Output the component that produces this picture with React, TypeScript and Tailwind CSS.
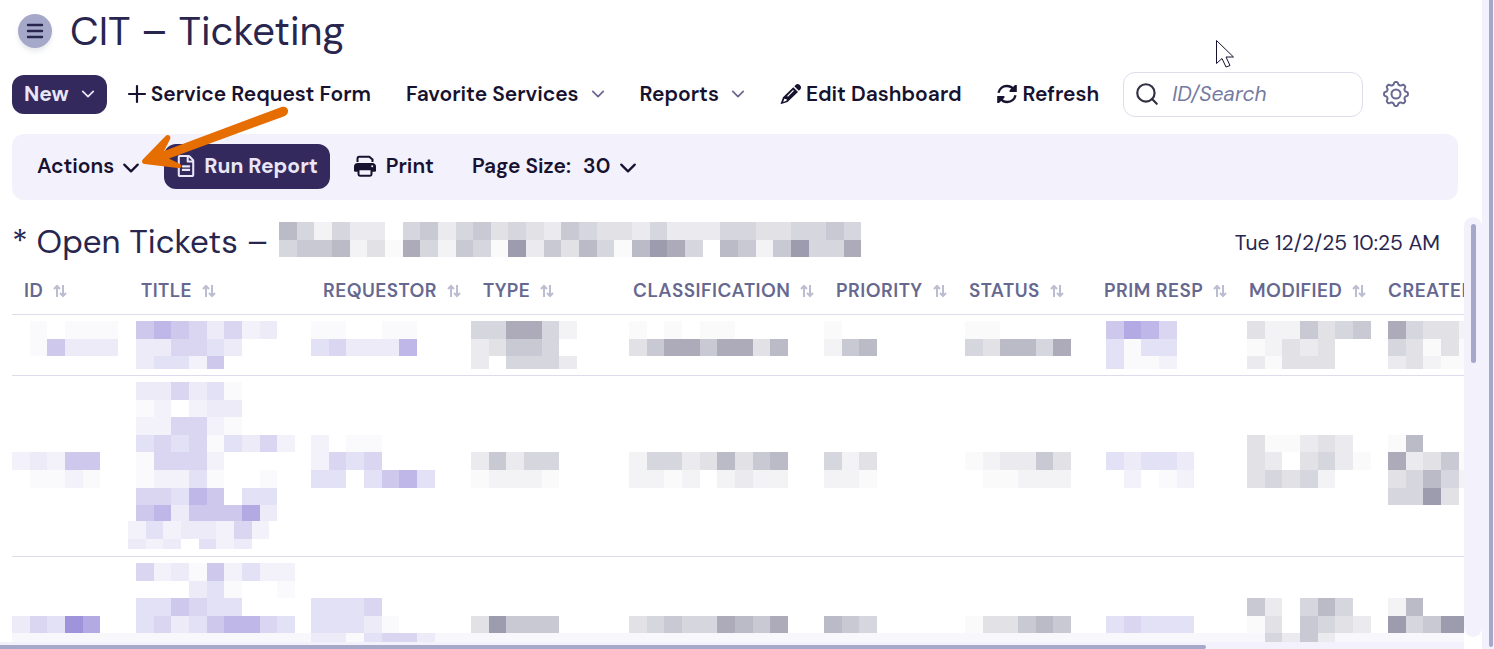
import { Search } from 'lucide-react';
import { FaRegFileAlt } from 'react-icons/fa';

type Tone = 'gray' | 'violet';

const TONES: Record<Tone, string[]> = {
  gray: ['none', '#fafafb', '#f3f3f6', '#ebebef', '#e1e1e6', '#d6d7de', '#c9c9d3', '#bbbac7', '#adabba', '#9c9cae'],
  violet: ['none', '#fafafd', '#f3f2fb', '#edebf8', '#e3e1f5', '#dad6f2', '#cec8ed', '#bfb7e8', '#b3aae3', '#9f94dc'],
};

const STEP_X = 17.65;
const STEP_Y = 17.6;

const HEADING_MASK = ['752533056356454365443533355445565', '566724185265193647517985076269558'];

interface Column {
  label: string;
  width: string;
  pad: string;
  tone: Tone;
}

const COLUMNS: Column[] = [
  { label: 'ID', width: 'w-[117px]', pad: 'pl-0', tone: 'violet' },
  { label: 'TITLE', width: 'w-[182px]', pad: 'pl-[7px]', tone: 'violet' },
  { label: 'REQUESTOR', width: 'w-[160px]', pad: 'pl-0', tone: 'violet' },
  { label: 'TYPE', width: 'w-[150px]', pad: 'pl-0', tone: 'gray' },
  { label: 'CLASSIFICATION', width: 'w-[203px]', pad: 'pl-2', tone: 'gray' },
  { label: 'PRIORITY', width: 'w-[133px]', pad: 'pl-0', tone: 'gray' },
  { label: 'STATUS', width: 'w-[135px]', pad: 'pl-2', tone: 'gray' },
  { label: 'PRIM RESP', width: 'w-[145px]', pad: 'pl-[14px]', tone: 'violet' },
  { label: 'MODIFIED', width: 'w-[139px]', pad: 'pl-[10px]', tone: 'gray' },
  { label: 'CREATED', width: 'w-[180px]', pad: 'pl-3', tone: 'gray' },
];

// One string per line of a cell, one digit per block, 0 is empty
const ROWS: { height: string; maxHeight: number; cells: string[][]; extra?: string[] }[] = [
  {
    height: 'h-[61px]',
    maxHeight: 48,
    cells: [
      ['010111', '016333'],
      ['67653523', '335543', '34426'],
      ['110011', '453337'],
      ['558852', '34665', '305553'],
      ['101011', '468868847'],
      ['1', '267'],
      ['11', '547758'],
      ['6875', '4144', '4112'],
      ['4226456', '12434', '31444'],
      ['85442', '54141', '34211'],
    ],
  },
  {
    height: 'h-[181px]',
    maxHeight: 139,
    cells: [
      ['', '', '', '', '23266', '01121'],
      ['335341', '120233', '225521', '454514352', '15552', '12241001', '55476044', '67366683'],
      ['', '', '', '2011', '2545', '4404674'],
      ['', '', '', '', '36355', '12221'],
      ['', '', '', '', '255347467', '221202322'],
      ['', '', '', '', '524', '221'],
      ['', '', '', '', '123364', '011222'],
      ['', '', '', '', '43443', '02012'],
      ['', '', '', '411343', '4304531', '45452'],
      ['', '', '', '17', '83461', '45752', '5594'],
    ],
    extra: ['24233252', '3230423'],
  },
  {
    height: 'h-[181px]',
    maxHeight: 80,
    cells: [
      ['', '', '', '35498'],
      ['523162422', '000341001', '446544', '453467754'],
      ['', '', '4445', '44431', '3314553'],
      ['', '', '', '49666'],
      ['', '', '', '456558768'],
      ['', '', '', '765'],
      ['', '', '', '144676'],
      ['', '', '', '45444'],
      ['', '', '630575', '1406543', '05363'],
      ['', '', '27', '95699'],
    ],
  },
];

function Mosaic({ lines, tone, maxHeight }: { lines: string[]; tone: Tone; maxHeight: number }) {
  const cols = Math.max(...lines.map(l => l.length));
  const width = Math.round(cols * STEP_X);
  const height = Math.min(Math.round(lines.length * STEP_Y), maxHeight);
  return (
    <svg className="block max-w-none" width={width} height={height} shapeRendering="crispEdges" aria-hidden="true">
      {lines.map((line, y) =>
        line.split('').map((n, x) => (
          <rect key={`${x}-${y}`} x={x * STEP_X} y={y * STEP_Y} width={STEP_X} height={STEP_Y} fill={TONES[tone][Number(n)]} />
        ))
      )}
    </svg>
  );
}

function Chevron({ className }: { className: string }) {
  return (
    <svg className={className} viewBox="0 0 16 16" fill="none" stroke="currentColor" strokeLinecap="round" strokeLinejoin="round" aria-hidden="true">
      <path d="M2 5l6 6 6-6" />
    </svg>
  );
}

function SortIcon() {
  return (
    <svg className="w-[14px] h-[14px] text-[#bcbdd0]" viewBox="0 0 14 14" fill="none" stroke="currentColor" strokeWidth={2} aria-hidden="true">
      <path d="M4 13V2M1 5l3-3 3 3M10 1v11M7 9l3 3 3-3" />
    </svg>
  );
}

function PencilIcon() {
  return (
    <svg className="w-[22px] h-[22px]" viewBox="0 0 22 22" fill="currentColor" aria-hidden="true">
      <path d="M14.300 3.200l1.600-1.500c1.100-1 2.600-.9 3.600.1l.8.9c1 1 1 2.500.1 3.500l-1.500 1.500z" />
      <path fillRule="evenodd" d="M13.300 4.200l4.700 4.700L7.500 18.900l-6.300 2.200c-.4.1-.6-.1-.5-.5L3 14.300zM4.400 15.500l-1.200 3.400 3.300-1.200.2-1.700-1.700-.1z" />
      <path d="M7.500 13.300l6-6" stroke="#fff" strokeWidth="1.200" fill="none" />
    </svg>
  );
}

function RefreshIcon() {
  return (
    <svg className="w-5 h-5" viewBox="0 0 20 20" fill="none" stroke="currentColor" strokeWidth={2.4} aria-hidden="true">
      <path d="M1.500 8.700C2.400 4.700 5.700 2 9.800 2c3 0 5.400 1.400 7 3.700M18.500 11.300c-.9 4-4.200 6.700-8.300 6.700-3 0-5.400-1.400-7-3.700" />
      <path d="M19.800 1v7h-7.200v-1.800l5.400-5.200zM.2 19v-7h7.200v1.800l-5.400 5.200z" fill="currentColor" stroke="none" />
    </svg>
  );
}

function PrinterIcon() {
  return (
    <svg className="w-[22px] h-[22px]" viewBox="0 0 22 22" fill="none" aria-hidden="true">
      <path d="M3.500 7V3.700C3.500 2.500 4.300 1.800 5.300 1.800h10l3.200 2.700V7" stroke="currentColor" strokeWidth="2" />
      <path d="M3.500 8h15C20.400 8 22 9.400 22 11.300V15.500c0 .8-.4 1.200-1.200 1.200H1.200C.4 16.700 0 16.300 0 15.500v-4.200C0 9.400 1.600 8 3.500 8z" fill="currentColor" />
      <path d="M4.500 14.300h13v5c0 .9-.5 1.400-1.400 1.400H5.900c-.9 0-1.400-.5-1.400-1.400z" fill="#f3f1fc" stroke="currentColor" strokeWidth="2" />
      <circle cx="18.200" cy="11.300" r="1" fill="#f3f1fc" />
    </svg>
  );
}

// Eight-lobed cog, sampled as a wavy ring
function GearIcon() {
  const points = Array.from({ length: 96 }, (_, i) => {
    const a = (i / 96) * Math.PI * 2;
    const wave = Math.cos(8 * a);
    const r = 10.7 + 1.3 * Math.tanh(2 * wave);
    return `${(13 + r * Math.cos(a)).toFixed(2)},${(13 + r * Math.sin(a)).toFixed(2)}`;
  });
  return (
    <svg className="w-[26px] h-[26px]" viewBox="0 0 26 26" fill="none" stroke="currentColor" strokeWidth={2} strokeLinejoin="round" aria-hidden="true">
      <polygon points={points.join(' ')} />
      <circle cx="13" cy="13" r="4.500" />
    </svg>
  );
}

function Header() {
  return (
    <header className="flex items-center gap-[18px] h-[62px] pl-[18px]">
      <button aria-label="Menu" className="flex items-center justify-center w-[34px] h-[34px] rounded-full bg-[#a6a8ca] shadow-md shadow-gray-200">
        <svg className="w-[18px] h-4" viewBox="0 0 18 16" stroke="#28264f" strokeWidth={2.4} strokeLinecap="round" aria-hidden="true">
          <path d="M2 2h14M2 8h14M2 14h14" />
        </svg>
      </button>
      <h1 className="text-[40px] leading-none text-[#28264f]">CIT – Ticketing</h1>
    </header>
  );
}

function Toolbar() {
  return (
    <nav className="flex items-center h-16 pl-3 text-[21px] leading-[30px] font-semibold text-[#17122f] whitespace-nowrap">
      <button className="flex items-center gap-3 h-[39px] px-3 mr-5 rounded-xl bg-[#34295c] text-[#e9e6f7] font-bold">
        New
        <Chevron className="w-[14px] h-[14px] stroke-2" />
      </button>
      <a href="#request" className="flex items-center gap-1 mr-[35px]">
        <svg className="w-5 h-5" viewBox="0 0 20 20" stroke="currentColor" strokeWidth={2.2} strokeLinecap="round" aria-hidden="true">
          <path d="M10 2v16M2 10h16" />
        </svg>
        Service Request Form
      </a>
      <button className="flex items-center gap-3 mr-[35px]">
        Favorite Services
        <Chevron className="w-[14px] h-[14px] stroke-2 text-[#6b688f]" />
      </button>
      <button className="flex items-center gap-3 mr-[35px]">
        Reports
        <Chevron className="w-[14px] h-[14px] stroke-2 text-[#6b688f]" />
      </button>
      <button className="flex items-center gap-1 mr-[35px]">
        <PencilIcon />
        Edit Dashboard
      </button>
      <button className="flex items-center gap-[6px] mr-6">
        <RefreshIcon />
        Refresh
      </button>
      <label className="flex items-center gap-3 w-60 h-[45px] px-[10px] rounded-xl border border-[#dfdcec] font-normal">
        <Search className="w-[26px] h-[26px] shrink-0 text-[#343044]" />
        <input type="text" aria-label="ID/Search" placeholder="ID/Search" className="w-full min-w-0 outline-none italic placeholder:text-[#757a9f]" />
      </label>
      <button aria-label="Settings" className="ml-5 text-[#676990]">
        <GearIcon />
      </button>
    </nav>
  );
}

function ReportBar() {
  return (
    <div className="flex items-center h-[66px] mt-2 ml-3 mr-6 pl-[25px] pb-[2px] rounded-xl bg-[#f3f1fc] text-[21px] leading-[30px] font-semibold text-[#17122f] whitespace-nowrap">
      <button className="flex items-center gap-2 mr-6">
        Actions
        <Chevron className="w-[18px] h-[18px] mt-1 stroke-2" />
      </button>
      <button className="flex items-center gap-2 h-[45px] px-3 mr-6 rounded-xl bg-[#34295c] text-[#e9e6f7] font-bold">
        <FaRegFileAlt className="w-5 h-[22px]" />
        Run Report
      </button>
      <button className="flex items-center gap-[10px] mr-[38px]">
        <PrinterIcon />
        Print
      </button>
      <label htmlFor="page-size">Page Size:</label>
      <select id="page-size" defaultValue="30" className="appearance-none ml-3 bg-transparent outline-none">
        <option>30</option>
      </select>
      <Chevron className="w-[18px] h-[18px] ml-2 mt-1 stroke-2" />
    </div>
  );
}

function TicketTable() {
  return (
    <table className="relative table-fixed w-[1544px] ml-3 border-collapse">
      <thead>
        <tr className="h-[52px] border-b border-[#dedcec]">
          {COLUMNS.map(c => (
            <th key={c.label} className={`${c.width} pl-3 pt-2 pb-px text-left text-[19px] leading-6 font-semibold tracking-wide text-[#66688f] whitespace-nowrap`}>
              <span className="flex items-center gap-[10px]">
                {c.label}
                <SortIcon />
              </span>
            </th>
          ))}
        </tr>
      </thead>
      <tbody>
        {ROWS.map((row, r) => (
          <tr key={r} className={`${row.height} border-b border-[#dedcec]`}>
            {row.cells.map((lines, i) => (
              <td key={COLUMNS[i].label} className={`${COLUMNS[i].pad} pt-[6px] align-top`}>
                <Mosaic lines={lines} tone={COLUMNS[i].tone} maxHeight={i === 1 || r !== 1 ? row.maxHeight : 180} />
                {i === 1 && row.extra && (
                  <div className="-ml-2">
                    <Mosaic lines={row.extra} tone="violet" maxHeight={28} />
                  </div>
                )}
              </td>
            ))}
          </tr>
        ))}
      </tbody>
    </table>
  );
}

function Report() {
  return (
    <section className="flex flex-1 min-h-0 mt-[17px]">
      <div className="relative flex-1 min-w-0 overflow-hidden">
        <div className="absolute bottom-0 left-3 right-0 h-[9px] bg-[#f8f7fc]" />
        <div className="relative flex items-center h-[45px] pl-3 pr-6">
          <h2 className="pt-1 text-[33px] leading-none text-[#28264f] whitespace-nowrap">* Open Tickets –</h2>
          <div className="ml-[10px]">
            <Mosaic lines={HEADING_MASK} tone="gray" maxHeight={35} />
          </div>
          <time className="ml-auto pt-2 text-[21px] text-[#28264f] whitespace-nowrap">Tue 12/2/25 10:25 AM</time>
        </div>
        <TicketTable />
      </div>
      <div className="w-[18px] mb-[5px] rounded-full bg-[#f3f1fc] pt-[7px]">
        <div className="mx-auto w-[5px] h-[139px] rounded-full bg-[#a6a8ca]" />
      </div>
    </section>
  );
}

// Callout arrow pointing at the Actions menu
function Callout() {
  return (
    <svg className="absolute left-[140px] top-[104px] w-[152px] h-[68px] pointer-events-none" viewBox="0 0 152 68" fill="#e66d00" aria-hidden="true">
      <path d="M141.500 3c3.200-1 6 .4 6.500 3.200.4 2.800-1 5-3.700 6L29 54.500l10.500 5.200c1.700.9 2 2.200 1.500 3.200-.5 1.100-1.700 1.400-3.400 1.100L4.500 60c-3-.5-3.300-3.300-1-5.300L25.600 32c1.200-1.200 2.700-1.300 3.800-.4 1.100.9 1.300 2.200.6 3.600L24 47z" />
    </svg>
  );
}

function Pointer() {
  return (
    <svg className="absolute left-[1216px] top-[40px] w-[19px] h-7 pointer-events-none" viewBox="0 0 19 28" fill="#fff" stroke="#17122f" aria-hidden="true">
      <path d="M.5.500v23l5.500-5 4 8.500 4-1.500-4-8.500h7.500z" />
    </svg>
  );
}

export default function App() {
  return (
    <div className="relative flex h-screen overflow-hidden bg-white font-['DM_Sans','Inter',sans-serif]">
      <main className="flex flex-col flex-1 min-w-0">
        <Header />
        <Toolbar />
        <ReportBar />
        <Report />
        <div className="h-[7px] mr-[18px] pt-[3px] bg-[#f3f1fc]">
          <div className="w-14/17 h-1 rounded-r-full bg-[#a6a8ca]" />
        </div>
      </main>
      <div className="flex justify-end w-3 pr-px bg-[#f3f1fc]">
        <div className="w-1 mb-[2px] rounded-b-full bg-[#a6a8ca]" />
      </div>
      <Callout />
      <Pointer />
    </div>
  );
}
